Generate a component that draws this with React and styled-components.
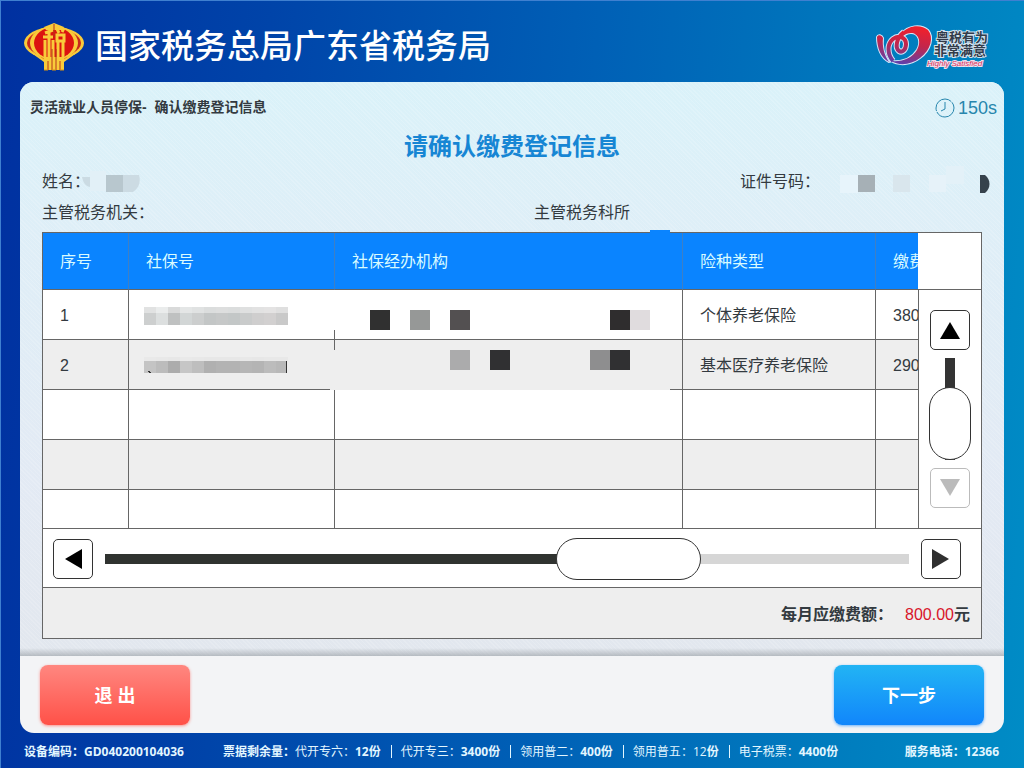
import React, { useState } from "react";
import styled, { createGlobalStyle, css } from "styled-components";

const GlobalStyle = createGlobalStyle`
  *, *::before, *::after {
    box-sizing: border-box;
  }
  body {
    margin: 0;
    font-family: "Liberation Sans", "Noto Sans CJK SC", sans-serif;
    font-size: 16px;
    color: #333a40;
  }
`;

const columns = ["序号", "社保号", "社保经办机构", "险种类型", "缴费"];

const stock = [
  { name: "代开专六", count: "12", bold: true },
  { name: "代开专三", count: "3400", bold: true },
  { name: "领用普二", count: "400", bold: true },
  { name: "领用普五", count: "12", bold: false },
  { name: "电子税票", count: "4400", bold: true },
];

const numberTones = {
  1: ["#cdcfcf", "#dcdfdf", "#bfc1c1", "#d2d6d6", "#cccece", "#c3c6c6", "#c6c8c8", "#c3c7c7", "#c9cbcb", "#cfcece", "#d2d0d0", "#c9c9c9"],
  2: ["#c4c4c4", "#bcbcbc", "#acacac", "#c6c6c6", "#bebebe", "#b0b0b0", "#b3b3b3", "#b3b3b3", "#b6b6b6", "#b4b4b4", "#bcbcbc", "#b8b8b8"],
};

function TaxEmblem() {
  return (
    <svg width="60" height="48" viewBox="0 0 60 48" aria-hidden="true">
      <ellipse cx="30" cy="20" rx="30" ry="16" fill="#f9cb3a" />
      <path d="M6 29l14 10v8h20v-8l14-10z" fill="#f9cb3a" />
      <ellipse cx="30" cy="20" rx="27" ry="14" fill="#c8281c" />
      <path d="M11 30l13 9v3h12v-3l13-9z" fill="#c8281c" />
      <ellipse cx="30" cy="20" rx="24" ry="17" fill="#f9cb3a" />
      <ellipse cx="30" cy="20" rx="20" ry="16" fill="#dc1410" />
      <path d="M20 4l10-4 10 4-2 3H22z" fill="#f9cb3a" />
      <path d="M20 34h20v13H20z" fill="#f9cb3a" />
      <g fill="none" stroke="#f9cb3a" strokeWidth="3">
        <path d="M21 10l8-3M19 14h10M25 9v30M21 17v19M29 17v22" />
        <path d="M33 6l2 4M40 5l-2 4M33 12h7v6h-7zM34 18v20M39 18v18" />
      </g>
      <path d="M30 1v13M24 38v9M28 26v21M32 26v21M36 38v9" stroke="#b5351a" strokeWidth="1" />
      <path d="M20 47h4M28 47h4M36 47h4" stroke="#d8920f" strokeWidth="1" />
    </svg>
  );
}

function SatisfiedLogo() {
  const hook = "M2 13C2 24 6 34 14 38C9 31 7 22 8 14C7 11 3 10 2 13z";
  const loop = "M18 37C12 30 12 20 18 15C24 10 31 14 31 20C31 26 27 29 24 27C20 24 21 14 29 8";
  const crescent =
    "M26 10C33 1 46 0 53 6C59 13 56 26 45 34C36 41 24 42 16 37C28 38 37 34 42 26C47 17 43 9 36 9C31 9 28 12 26 14z";
  return (
    <svg width="114" height="46" viewBox="0 0 114 46" role="img" aria-label="粤税有为 非常满意">
      <defs>
        <linearGradient id="swirl" gradientUnits="userSpaceOnUse" x1="30" y1="2" x2="24" y2="42">
          <stop offset="0" stopColor="#f0202c" />
          <stop offset="0.45" stopColor="#c2264c" />
          <stop offset="1" stopColor="#5044b8" />
        </linearGradient>
      </defs>
      <g fill="none" stroke="#d6e6f8" strokeLinejoin="round">
        <path d={crescent} strokeWidth="2" />
        <path d={hook} strokeWidth="2" />
        <path d={loop} strokeWidth="6" />
      </g>
      <path d={hook} fill="url(#swirl)" />
      <path d={crescent} fill="url(#swirl)" />
      <path d={loop} fill="none" stroke="url(#swirl)" strokeWidth="4" />
      <LogoText x="61" y="18">粤税有为</LogoText>
      <LogoText x="59" y="31">非常满意</LogoText>
      <LogoTagline x="52" y="42">Highly Satisfied</LogoTagline>
    </svg>
  );
}

function ClockIcon() {
  return (
    <svg width="20" height="20" viewBox="0 0 20 20" fill="none" stroke="#2786ad" strokeWidth="1" aria-hidden="true">
      <circle cx="10" cy="10" r="9" strokeDasharray="24 1" />
      <path d="M10 4v7l-4 2" />
    </svg>
  );
}

function Arrow({ turn = 0 }) {
  return (
    <svg width="20" height="20" viewBox="0 0 20 20" aria-hidden="true">
      <path d="M0 19L10 2l10 17z" fill="currentColor" transform={`rotate(${turn} 10 10)`} />
    </svg>
  );
}

function MaskedNumber({ row }) {
  const top = row === 1 ? 6 : 4;
  return (
    <svg width="144" height="18" viewBox="0 0 144 18" shapeRendering="crispEdges" aria-hidden="true">
      {numberTones[row].map((tone, i) => (
        <g key={i} fill={tone}>
          <rect x={i * 12} y={top} width={row === 2 && i === 11 ? 10 : 12} height="12" />
          <rect x={i * 12} y="0" width="12" height={top} opacity={row === 1 ? 0.6 : 0.1} />
        </g>
      ))}
      {row === 2 && <path d="M4 14l3 2M142 4v12" stroke="#333" strokeWidth="1" />}
    </svg>
  );
}

function MaskedName() {
  return (
    <svg width="58" height="22" viewBox="0 0 58 22" aria-hidden="true">
      <path d="M0 6h8v10C3 15 1 11 0 6z" fill="#cbdbe3" />
      <rect x="8" y="0" width="16" height="20" fill="#e2f0f7" />
      <rect x="24" y="4" width="17" height="17" fill="#b8c7ce" />
      <path d="M41 4h16c2 7 0 13-6 17H41z" fill="#ccdbe3" />
    </svg>
  );
}

function MaskedId() {
  return (
    <svg width="152" height="32" viewBox="0 0 152 32" aria-hidden="true">
      <rect x="2" y="9" width="18" height="18" fill="#e7f4fb" />
      <rect x="20" y="9" width="17" height="17" fill="#a6b0b6" />
      <rect x="55" y="9" width="17" height="17" fill="#d9e6ed" />
      <rect x="91" y="9" width="17" height="17" fill="#e6f2f9" />
      <rect x="108" y="0" width="18" height="18" fill="#e3f1f8" />
      <path d="M142 9h5c6 5 6 13 0 18h-5z" fill="#36424c" />
    </svg>
  );
}

function MaskedOffice({ row }) {
  if (row === 1) {
    return (
      <OfficeMask width="340" height="40" viewBox="0 0 340 40" aria-hidden="true">
        <rect width="340" height="40" fill="#fff" />
        <rect x="40" y="20" width="20" height="20" fill="#303030" />
        <rect x="80" y="20" width="20" height="20" fill="#969897" />
        <rect x="120" y="20" width="20" height="20" fill="#535051" />
        <rect x="280" y="20" width="20" height="20" fill="#2f2d2e" />
        <rect x="300" y="20" width="20" height="20" fill="#e0dcde" />
      </OfficeMask>
    );
  }
  return (
    <OfficeMask $low width="340" height="40" viewBox="0 0 340 40" aria-hidden="true">
      <rect width="340" height="40" fill="#eee" />
      <rect x="120" y="0" width="20" height="20" fill="#ababac" />
      <rect x="160" y="0" width="20" height="20" fill="#303032" />
      <rect x="260" y="0" width="20" height="20" fill="#8e8e8f" />
      <rect x="280" y="0" width="20" height="20" fill="#303032" />
    </OfficeMask>
  );
}

function App() {
  const [x, setX] = useState(137);
  const [y, setY] = useState(200);

  return (
    <Page>
      <GlobalStyle />
      <Header>
        <TaxEmblem />
        <Bureau>国家税务总局广东省税务局</Bureau>
        <SatisfiedLogo />
      </Header>

      <Panel>
        <Content>
          <TopRow>
            <Crumb>灵活就业人员停保-&nbsp; 确认缴费登记信息</Crumb>
            <Countdown>
              <ClockIcon />
              150s
            </Countdown>
          </TopRow>
          <Title>请确认缴费登记信息</Title>

          <InfoRow>
            <Info>
              姓名：
              <MaskedName />
            </Info>
            <IdInfo>
              证件号码：
              <MaskedId />
            </IdInfo>
          </InfoRow>
          <InfoRow>
            <Info>主管税务机关：</Info>
            <Info>主管税务科所</Info>
          </InfoRow>

          <Board>
            <HeaderNub />
            <BoardBody>
              <TableWrap>
                <Table>
                  <colgroup>
                    <Col $width={86} />
                    <Col $width={206} />
                    <Col />
                    <Col $width={193} />
                    <Col $width={42} />
                  </colgroup>
                  <thead>
                    <tr>
                      {columns.map((name) => (
                        <Th key={name} scope="col">{name}</Th>
                      ))}
                    </tr>
                  </thead>
                  <tbody>
                    <Row>
                      <Td>1</Td>
                      <Td><MaskedNumber row={1} /></Td>
                      <Td $masked><MaskedOffice row={1} /></Td>
                      <Td>个体养老保险</Td>
                      <Td>380</Td>
                    </Row>
                    <Row $shaded>
                      <Td>2</Td>
                      <Td><MaskedNumber row={2} /></Td>
                      <Td $masked><MaskedOffice row={2} /></Td>
                      <Td>基本医疗养老保险</Td>
                      <Td>290</Td>
                    </Row>
                    <Row><Td /><Td /><Td /><Td /><Td /></Row>
                    <Row $shaded><Td /><Td /><Td /><Td /><Td /></Row>
                    <Row $last><Td /><Td /><Td /><Td /><Td /></Row>
                  </tbody>
                </Table>
              </TableWrap>
              <Side>
                <SideHead />
                <Rail>
                  <ArrowButton aria-label="向上" onClick={() => setY(0)}>
                    <Arrow />
                  </ArrowButton>
                  <VerticalSlider
                    aria-label="纵向滚动"
                    value={y}
                    onChange={(e) => setY(Number(e.target.value))}
                  />
                  <ArrowButton aria-label="向下" disabled={y === 200} onClick={() => setY(200)}>
                    <Arrow turn={180} />
                  </ArrowButton>
                </Rail>
              </Side>
            </BoardBody>
            <ScrollRow>
              <ArrowButton aria-label="向左" onClick={() => setX(Math.max(0, x - 20))}>
                <Arrow turn={270} />
              </ArrowButton>
              <HorizontalSlider
                aria-label="横向滚动"
                value={x}
                onChange={(e) => setX(Number(e.target.value))}
              />
              <ArrowButton $soft aria-label="向右" onClick={() => setX(Math.min(200, x + 20))}>
                <Arrow turn={90} />
              </ArrowButton>
            </ScrollRow>
            <Total>
              <b>每月应缴费额：</b>
              <span>
                <Amount>800.00</Amount>
                <b>元</b>
              </span>
            </Total>
          </Board>
        </Content>

        <Actions>
          <ActionButton $danger>退 出</ActionButton>
          <ActionButton>下一步</ActionButton>
        </Actions>
      </Panel>

      <StatusBar>
        <b>设备编码：GD040200104036</b>
        <Stock>
          <b>票据剩余量：</b>
          {stock.map((item) => (
            <StockItem key={item.name}>
              {item.name}：<Count $bold={item.bold}>{item.count}</Count>
              <b>份</b>
            </StockItem>
          ))}
        </Stock>
        <b>服务电话：12366</b>
      </StatusBar>
    </Page>
  );
}

const Page = styled.div`
  display: flex;
  flex-direction: column;
  min-height: 100vh;
  background: linear-gradient(95deg, #0030a0 0%, #0044a9 25%, #0060b6 55%, #007cbe 82%, #008cc6 100%);
  box-shadow: inset 1px 1px 0 #3f80d0;
`;

const Header = styled.header`
  display: flex;
  align-items: center;
  gap: 11px;
  height: 82px;
  padding: 12px 35px 0 24px;
`;

const Bureau = styled.h1`
  flex: 1;
  margin: 0;
  font-size: 33px;
  line-height: 40px;
  font-weight: 500;
  color: #fff;
`;

const LogoText = styled.text`
  font-size: 13px;
  font-weight: 700;
  fill: #333c4a;
  stroke: #d3e2ee;
  stroke-width: 2px;
  paint-order: stroke;
`;

const LogoTagline = styled.text`
  font-size: 8px;
  font-style: italic;
  fill: #d8325a;
  stroke: #eedfec;
  stroke-width: 2px;
  paint-order: stroke;
`;

const Panel = styled.main`
  flex: 1;
  display: flex;
  flex-direction: column;
  margin: 0 20px;
  border-radius: 14px;
  overflow: hidden;
  background: #f3f4f6;
`;

const Content = styled.section`
  flex: 1;
  padding-bottom: 17px;
  background:
    linear-gradient(0deg, rgba(150, 156, 162, 0.6), transparent 8px),
    repeating-linear-gradient(45deg, rgba(255, 255, 255, 0.15) 0 1px, transparent 1px 3px),
    linear-gradient(180deg, #daf2f9 0%, #dfeef7 30%, #e3eaf4 70%, #e2e7ee 100%);
`;

const TopRow = styled.div`
  display: flex;
  align-items: center;
  justify-content: space-between;
  height: 49px;
  padding: 0 7px 0 10px;
`;

const Crumb = styled.span`
  font-size: 14px;
  line-height: 20px;
  font-weight: 700;
`;

const Countdown = styled.span`
  display: flex;
  align-items: center;
  gap: 3px;
  padding-top: 2px;
  font-size: 18px;
  line-height: 24px;
  color: #2786ad;
`;

const Title = styled.h2`
  margin: 0 0 3px;
  font-size: 24px;
  line-height: 32px;
  font-weight: 700;
  text-align: center;
  color: #1786d4;
`;

const InfoRow = styled.div`
  display: flex;
  height: 31px;
`;

const Info = styled.div`
  flex: 1;
  display: flex;
  align-items: center;
  padding-left: 22px;
  line-height: 24px;

  svg {
    margin-left: -8px;
  }
`;

const IdInfo = styled(Info)`
  flex: none;
  padding: 0 14px 0 0;

  svg {
    margin-left: 18px;
  }
`;

const Board = styled.div`
  position: relative;
  margin: 4px 22px 0;
  border: 1px solid #666;
  background: #fff;
`;

/* small tab that sticks out over the header edge */
const HeaderNub = styled.i`
  position: absolute;
  top: -3px;
  right: 311px;
  width: 20px;
  height: 3px;
  background: #0a84ff;
`;

const BoardBody = styled.div`
  display: flex;
  border-bottom: 1px solid #666;
`;

const TableWrap = styled.div`
  flex: 1;
  min-width: 0;
`;

const Table = styled.table`
  width: 100%;
  table-layout: fixed;
  border-spacing: 0;
`;

const Col = styled.col`
  ${(p) => p.$width && css`width: ${p.$width}px;`}
`;

const cell = css`
  padding: 2px 0 0 17px;
  text-align: left;
  white-space: nowrap;
  overflow: hidden;
  line-height: 24px;
  border-right: 1px solid #666;
  border-bottom: 1px solid #666;

  &:last-child {
    border-right: 0;
  }
`;

const Th = styled.th`
  ${cell}
  height: 57px;
  font-weight: 400;
  color: #d9fbff;
  background: #0a84ff;
  border-right-color: #3f7fc4;
`;

const Td = styled.td`
  ${cell}

  svg {
    display: block;
    margin-left: -2px;
  }

  ${(p) => p.$masked && css`
    position: relative;
    overflow: visible;
  `}
`;

const Row = styled.tr`
  height: ${(p) => (p.$last ? 38 : 50)}px;
  background: ${(p) => (p.$shaded ? "#eee" : "#fff")};

  ${(p) => p.$last && css`
    td {
      border-bottom: 0;
    }
  `}
`;

const OfficeMask = styled.svg`
  position: absolute;
  left: -3px;
  top: ${(p) => (p.$low ? 10 : 0)}px;
`;

const Side = styled.div`
  display: flex;
  flex-direction: column;
  width: 63px;
`;

const SideHead = styled.div`
  height: 57px;
  border-bottom: 1px solid #666;
`;

const Rail = styled.div`
  flex: 1;
  display: flex;
  flex-direction: column;
  align-items: center;
  gap: 8px;
  padding-top: 20px;
  border-left: 1px solid #666;
`;

const ArrowButton = styled.button`
  display: flex;
  align-items: center;
  justify-content: center;
  flex: none;
  width: 40px;
  height: 40px;
  padding: 0;
  color: ${(p) => (p.$soft ? "#303030" : "#000")};
  background: #fff;
  border: 1px solid #333;
  border-radius: 5px;

  &:disabled {
    color: #bbb;
    border-color: #bbb;
  }
`;

const Slider = styled.input.attrs({ type: "range", min: 0, max: 200 })`
  appearance: none;
  margin: 0;

  &::-webkit-slider-thumb {
    appearance: none;
    background: #fff;
    border: 1px solid #333;
    border-radius: 21px;
  }
`;

const VerticalSlider = styled(Slider)`
  writing-mode: vertical-lr;
  width: 42px;
  height: 102px;
  background: linear-gradient(#333, #333) center / 10px 100% no-repeat;

  &::-webkit-slider-thumb {
    width: 42px;
    height: 73px;
  }
`;

const HorizontalSlider = styled(Slider)`
  flex: 1;
  min-width: 0;
  height: 42px;
  background: linear-gradient(90deg, #303330 62%, #d6d6d6 62%) center / 100% 10px no-repeat;

  &::-webkit-slider-thumb {
    width: 145px;
    height: 42px;
  }
`;

const ScrollRow = styled.div`
  display: flex;
  align-items: center;
  gap: 12px;
  height: 59px;
  padding: 1px 20px 0 10px;
  border-bottom: 1px solid #666;
`;

const Total = styled.div`
  display: flex;
  align-items: center;
  justify-content: flex-end;
  gap: 12px;
  height: 50px;
  padding: 4px 11px 0;
  line-height: 24px;
  background: #eee;
`;

const Amount = styled.span`
  color: #d8142a;
`;

const Actions = styled.footer`
  display: flex;
  justify-content: space-between;
  padding: 9px 20px 8px;
`;

const ActionButton = styled.button`
  width: 150px;
  height: 60px;
  padding: 0 0 2px;
  border: 0;
  border-radius: 8px;
  font-family: inherit;
  font-size: 18px;
  font-weight: 700;
  color: #fff;
  background: linear-gradient(180deg, #22b4f4, #1186fb);
  box-shadow: 0 1px 3px rgba(17, 134, 251, 0.6);

  ${(p) => p.$danger && css`
    background: linear-gradient(180deg, #ff8780, #ff5148);
    box-shadow: 0 1px 3px rgba(255, 81, 72, 0.6);
  `}
`;

const StatusBar = styled.div`
  display: flex;
  align-items: center;
  gap: 39px;
  height: 35px;
  padding: 2px 25px 0 24px;
  font-family: "Open Sans", "Noto Sans CJK SC", sans-serif;
  font-size: 12px;
  line-height: 18px;
  white-space: nowrap;
  color: #e2f6ff;
`;

const Stock = styled.div`
  flex: 1;
  display: flex;
  align-items: center;
`;

const StockItem = styled.span`
  & + & {
    margin-left: 10px;
    padding-left: 10px;
    background: linear-gradient(#e2f6ff, #e2f6ff) left center / 1px 13px no-repeat;
  }
`;

const Count = styled.span`
  font-weight: ${(p) => (p.$bold ? 700 : 400)};
`;

export default App;
